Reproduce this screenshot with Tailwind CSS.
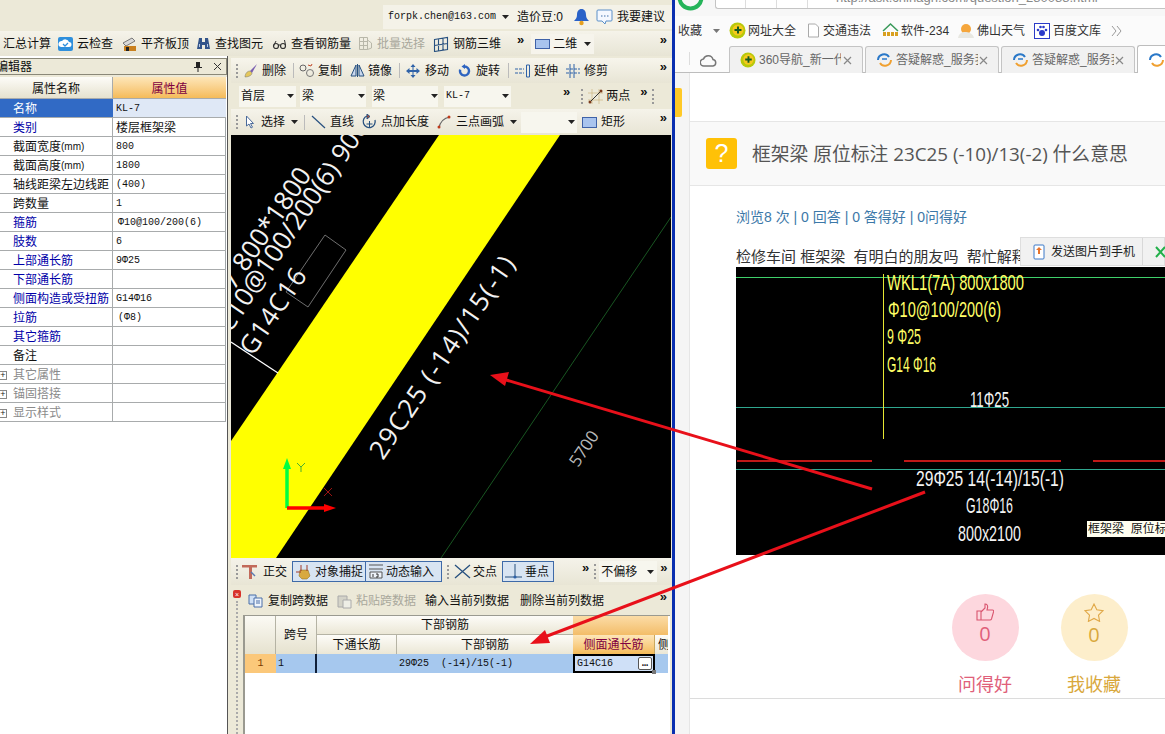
<!DOCTYPE html>
<html lang="zh-CN">
<head>
<meta charset="UTF-8">
<title>钢筋算量 - 框架梁</title>
<script src="https://cdn.jsdelivr.net/npm/@tailwindcss/browser@4"></script>
</head>
<body class="bg-white">
<div class="relative flex w-[1165px] h-[734px] overflow-hidden text-[12px] leading-[14px] text-[#111] font-['Liberation_Sans','Noto_Sans_CJK_SC',sans-serif]">

  <!-- software window -->
  <div class="flex flex-col w-[672px] shrink-0 bg-[#ece9d8]">
    <!-- account row -->
    <div class="flex justify-end h-[31px] shrink-0">
      <div class="flex items-center w-[289px] h-[24px] mt-[5px] bg-[#f4f2e8]">
        <span class="ml-[5px] font-['Liberation_Mono',monospace] text-[10px]">forpk.chen@163.com</span>
        <svg class="ml-[6px]" width="7" height="4"><path d="M0 0h7L3.500 4z" fill="#222"/></svg>
        <span class="ml-[8px]">造价豆:0</span>
        <svg class="ml-[10px]" width="17" height="18" viewBox="0 0 17 18"><path d="M8.500 1c3 0 4.500 2.500 4.500 6 0 3 1.500 4.500 3 6H1c1.500-1.500 3-3 3-6 0-3.500 1.500-6 4.500-6z" fill="#2a62c8"/><circle cx="8.500" cy="15" r="2.200" fill="#e5a021"/></svg>
        <svg class="ml-[6px]" width="17" height="18" viewBox="0 0 17 18"><path d="M2 2h13a1 1 0 0 1 1 1v9a1 1 0 0 1-1 1h-5l-1 3-3-3H2a1 1 0 0 1-1-1V3a1 1 0 0 1 1-1z" fill="#f4f8ff" stroke="#5a8fc8"/><path d="M5 8h1.500M8 8h1.500M11 8h1.500" stroke="#3f6fa8"/></svg>
        <span class="ml-[4px]">我要建议</span>
      </div>
    </div>

    <!-- main toolbar -->
    <div class="flex items-center h-[25px] shrink-0 bg-gradient-to-b from-[#f5f3ea] to-[#e8e5d5]">
      <span class="ml-[3px]">汇总计算</span>
      <span class="flex items-center gap-[4px] ml-[7px]"><svg width="15" height="16" viewBox="0 0 15 16"><rect y="1" width="15" height="14" rx="2" fill="#2f8fdc"/><path d="M3 11a3 3 0 0 1 1-6 4 4 0 0 1 7 1 2.500 2.500 0 0 1 0 5z" fill="#fff"/><path d="M5 8l2 2 3-3" stroke="#2f8fdc" stroke-width="1.300" fill="none"/></svg>云检查</span>
      <span class="flex items-center gap-[4px] ml-[9px]"><svg width="15" height="16" viewBox="0 0 15 16"><path d="M1 7l9-5 3 3-9 5z" fill="#d9d9d9" stroke="#777"/><rect x="2" y="10" width="12" height="5" fill="#c9801f"/><rect x="4" y="11" width="3" height="4" fill="#222"/></svg>平齐板顶</span>
      <span class="flex items-center gap-[4px] ml-[7px]"><svg width="15" height="14" viewBox="0 0 15 14"><path d="M3 1h3v4h3V1h3l2 11H9V8H6v4H1z" fill="#33548a"/><path d="M3 7h1v3H3zM11 7h1v3h-1z" fill="#b7c9e6"/></svg>查找图元</span>
      <span class="flex items-center gap-[4px] ml-[9px]"><svg width="15" height="12" viewBox="0 0 15 12"><circle cx="4" cy="8" r="2.500" fill="none" stroke="#333" stroke-width="1.200"/><circle cx="11" cy="8" r="2.500" fill="none" stroke="#333" stroke-width="1.200"/><path d="M6 7h2.500M1.500 8L4 3M13.500 7l-1-5" stroke="#333" fill="none"/></svg>查看钢筋量</span>
      <span class="flex items-center gap-[4px] ml-[7px] text-[#a9a89c]"><svg width="15" height="15" viewBox="0 0 15 15"><path d="M1.500 1.500h8v12h-8zM1.500 5.500h8M1.500 9.500h8M5.500 1.500v12M9.500 4l4 3v5l-4 1.500" fill="none" stroke="#b8b7a9"/></svg>批量选择</span>
      <span class="flex items-center gap-[4px] ml-[8px]"><svg width="16" height="16" viewBox="0 0 16 16"><path d="M1.500 3.500l13-2v12l-13 2zM5.500 3v12M10 2.500v12M1.500 9.500l13-2" fill="none" stroke="#27507f" stroke-width="1.100"/></svg>钢筋三维</span>
      <span class="ml-[16px] -mt-[8px] font-bold text-[13px]">»</span>
      <div class="flex items-center w-[63px] h-[20px] ml-[7px] bg-[#f6f4ec]">
        <svg class="ml-[4px]" width="15" height="10"><rect x="0.500" y="0.500" width="14" height="9" fill="#a9c4ee" stroke="#3f62a8"/></svg>
        <span class="ml-[3px]">二维</span>
        <svg class="ml-[7px]" width="7" height="4"><path d="M0 0h7L3.500 4z" fill="#222"/></svg>
      </div>
      <span class="ml-auto mr-[5px] -mt-[8px] font-bold text-[13px]">»</span>
    </div>

    <div class="flex flex-1 min-h-0">
      <!-- property editor -->
      <div class="flex flex-col w-[228px] shrink-0 bg-white border-r border-[#555]">
        <div class="flex items-center h-[17px] mt-[2px] bg-[#ece9d8] border border-l-0 border-[#8a8878] overflow-hidden">
          <span class="-ml-[4px]">编辑器</span>
          <svg class="ml-auto" width="8" height="10" viewBox="0 0 8 10"><path d="M2 0h4v5h2v1H4.500v4h-1V6H0V5h2z" fill="#222"/></svg>
          <svg class="ml-[11px] mr-[4px]" width="9" height="9"><path d="M1 1l7 7M8 1L1 8" stroke="#333"/></svg>
        </div>
        <div class="h-[2px] bg-[#ece9d8]"></div>
        <div class="grid grid-cols-[113px_113px] grid-rows-[22px_repeat(17,19px)] w-[226px] border-r border-[#a0a6a8] [&>div]:border-b [&>div]:border-[#a8abac] [&>div]:flex [&>div]:items-center [&>div]:pt-[2px]">
          <div class="justify-center bg-gradient-to-b from-[#fdfcf8] to-[#e6e2cf] border-r border-r-[#a8abac]">属性名称</div>
          <div class="justify-center bg-gradient-to-b from-[#fde6b8] to-[#f5bb58] text-[#800040]">属性值</div>

          <div class="pl-[13px] bg-[#316ac5] text-white">名称</div>
          <div class="pl-[3px] bg-[#dfe8f6] font-['Liberation_Mono',monospace] text-[10px]">KL-7</div>
          <div class="pl-[13px] text-[#0000a8] border-r border-r-[#a8abac]">类别</div>
          <div class="pl-[3px]">楼层框架梁</div>
          <div class="pl-[13px] border-r border-r-[#a8abac]">截面宽度<span class="text-[10px]">(mm)</span></div>
          <div class="pl-[3px] font-['Liberation_Mono',monospace] text-[10px]">800</div>
          <div class="pl-[13px] border-r border-r-[#a8abac]">截面高度<span class="text-[10px]">(mm)</span></div>
          <div class="pl-[3px] font-['Liberation_Mono',monospace] text-[10px]">1800</div>
          <div class="pl-[13px] border-r border-r-[#a8abac] whitespace-nowrap">轴线距梁左边线距</div>
          <div class="pl-[3px] font-['Liberation_Mono',monospace] text-[10px]">(400)</div>
          <div class="pl-[13px] border-r border-r-[#a8abac]">跨数量</div>
          <div class="pl-[3px] font-['Liberation_Mono',monospace] text-[10px]">1</div>
          <div class="pl-[13px] text-[#0000a8] border-r border-r-[#a8abac]">箍筋</div>
          <div class="pl-[5px] font-['Liberation_Mono',monospace] text-[10px]">Φ10@100/200(6)</div>
          <div class="pl-[13px] text-[#0000a8] border-r border-r-[#a8abac]">肢数</div>
          <div class="pl-[3px] font-['Liberation_Mono',monospace] text-[10px]">6</div>
          <div class="pl-[13px] text-[#0000a8] border-r border-r-[#a8abac]">上部通长筋</div>
          <div class="pl-[3px] font-['Liberation_Mono',monospace] text-[10px]">9Φ25</div>
          <div class="pl-[13px] text-[#0000a8] border-r border-r-[#a8abac]">下部通长筋</div>
          <div></div>
          <div class="pl-[13px] text-[#0000a8] border-r border-r-[#a8abac] whitespace-nowrap">侧面构造或受扭筋</div>
          <div class="pl-[3px] font-['Liberation_Mono',monospace] text-[10px]">G14Φ16</div>
          <div class="pl-[13px] text-[#0000a8] border-r border-r-[#a8abac]">拉筋</div>
          <div class="pl-[5px] font-['Liberation_Mono',monospace] text-[10px]">(Φ8)</div>
          <div class="pl-[13px] text-[#0000a8] border-r border-r-[#a8abac]">其它箍筋</div>
          <div></div>
          <div class="pl-[13px] border-r border-r-[#a8abac]">备注</div>
          <div></div>
          <div class="border-r border-r-[#a8abac] text-[#8a8a8a]"><span class="flex items-center justify-center w-[7px] h-[9px] border border-l-0 border-[#888] text-[#222] text-[9px] leading-none">+</span><span class="ml-[6px]">其它属性</span></div>
          <div></div>
          <div class="border-r border-r-[#a8abac] text-[#8a8a8a]"><span class="flex items-center justify-center w-[7px] h-[9px] border border-l-0 border-[#888] text-[#222] text-[9px] leading-none">+</span><span class="ml-[6px]">锚固搭接</span></div>
          <div></div>
          <div class="border-r border-r-[#a8abac] text-[#8a8a8a]"><span class="flex items-center justify-center w-[7px] h-[9px] border border-l-0 border-[#888] text-[#222] text-[9px] leading-none">+</span><span class="ml-[6px]">显示样式</span></div>
          <div></div>
        </div>
      </div>

      <!-- drawing column -->
      <div class="flex flex-col flex-1 min-w-0 pl-[3px]">
        <div class="h-[2px] shrink-0"></div>
        <!-- edit toolbar -->
        <div class="flex items-center h-[25px] shrink-0 bg-gradient-to-b from-[#f7f5ec] to-[#e8e5d5]">
          <span class="ml-[5px] h-[14px] border-l-2 border-dotted border-[#999]"></span>
          <span class="flex items-center gap-[4px] ml-[5px]"><svg width="15" height="15" viewBox="0 0 15 15"><path d="M14 1L7 8l2 2 5-9z" fill="#7a5fb0"/><path d="M2 14c0-3 2-6 5-6l2 2c0 2-3 4-7 4z" fill="#e4c75c" stroke="#777" stroke-width=".5"/></svg>删除</span>
          <span class="ml-[7px] h-[15px] border-l border-[#bbb]"></span>
          <span class="flex items-center gap-[3px] ml-[5px]"><svg width="16" height="15" viewBox="0 0 16 15"><circle cx="4" cy="5" r="3" fill="none" stroke="#666"/><circle cx="11" cy="10" r="3.500" fill="none" stroke="#777"/><path d="M9 2l3 1 1-2" stroke="#c04a2a" fill="none"/></svg>复制</span>
          <span class="flex items-center gap-[3px] ml-[8px]"><svg width="15" height="15" viewBox="0 0 15 15"><path d="M6 2v11H1zM9 2v11h5z" fill="#c9d8ef" stroke="#27507f"/><path d="M7.500 1v13" stroke="#27507f"/></svg>镜像</span>
          <span class="ml-[7px] h-[15px] border-l border-[#bbb]"></span>
          <span class="flex items-center gap-[5px] ml-[6px]"><svg width="14" height="14" viewBox="0 0 14 14"><path d="M7 0l2.500 3h-2v3h3V4L14 7l-3.500 3V8h-3v3h2L7 14l-2.500-3h2V8h-3v2L0 7l3.500-3v2h3V3h-2z" fill="#2f62a8"/></svg>移动</span>
          <span class="flex items-center gap-[5px] ml-[9px]"><svg width="13" height="13" viewBox="0 0 13 13"><path d="M6.500 2.500a4.500 4.500 0 1 1-4.300 3.200" fill="none" stroke="#2e64c0" stroke-width="2.400"/><path d="M7 0v5L3.500 2.500z" fill="#2e64c0"/></svg>旋转</span>
          <span class="ml-[8px] h-[15px] border-l border-[#bbb]"></span>
          <span class="flex items-center gap-[3px] ml-[6px]"><svg width="16" height="14" viewBox="0 0 16 14"><path d="M0 5h9M0 9h9" stroke="#2f62a8" stroke-dasharray="3 1"/><path d="M11.500 1h3v12h-3z" fill="none" stroke="#2f62a8"/></svg>延伸</span>
          <span class="flex items-center gap-[4px] ml-[8px]"><svg width="14" height="14" viewBox="0 0 14 14"><path d="M4 0v14M8 0v14" stroke="#2f62a8"/><path d="M0 5h14M0 9h14" stroke="#2f62a8" stroke-dasharray="3 1"/></svg>修剪</span>
          <span class="ml-auto mr-[5px] -mt-[8px] font-bold text-[13px]">»</span>
        </div>
        <!-- selector toolbar -->
        <div class="flex items-center h-[26px] shrink-0 bg-[#ece9d8]">
          <div class="flex items-center w-[57px] h-[21px] ml-[8px] bg-[#f7f6ee] pl-[2px]"><span>首层</span><svg class="ml-auto mr-[2px]" width="7" height="4"><path d="M0 0h7L3.500 4z" fill="#222"/></svg></div>
          <div class="flex items-center w-[66px] h-[21px] ml-[4px] bg-[#f7f6ee] pl-[2px]"><span>梁</span><svg class="ml-auto mr-[1px]" width="7" height="4"><path d="M0 0h7L3.500 4z" fill="#222"/></svg></div>
          <div class="flex items-center w-[66px] h-[21px] ml-[6px] bg-[#f7f6ee] pl-[1px]"><span>梁</span><svg class="ml-auto" width="7" height="4"><path d="M0 0h7L3.500 4z" fill="#222"/></svg></div>
          <div class="flex items-center w-[67px] h-[21px] ml-[6px] bg-[#f7f6ee] pl-[2px]"><span class="font-['Liberation_Mono',monospace] text-[10px]">KL-7</span><svg class="ml-auto mr-[2px]" width="7" height="4"><path d="M0 0h7L3.500 4z" fill="#222"/></svg></div>
          <span class="ml-[52px] -mt-[8px] font-bold text-[13px]">»</span>
          <span class="ml-[11px] h-[15px] border-l-2 border-dotted border-[#999]"></span>
          <span class="flex items-center gap-[3px] ml-[5px]"><svg width="15" height="15" viewBox="0 0 15 15"><path d="M0 4h15M0 11h15M4 0v15M11 0v15" stroke="#c0a060" stroke-width=".5"/><path d="M2 13L13 2" stroke="#333"/><circle cx="2" cy="13" r="1.500" fill="#7a3a1a"/><circle cx="13" cy="2" r="1.500" fill="#7a3a1a"/></svg>两点</span>
          <span class="ml-[10px] -mt-[8px] font-bold text-[13px]">»</span>
          <span class="ml-[5px] h-[15px] border-l-2 border-dotted border-[#999]"></span>
        </div>
        <!-- draw toolbar -->
        <div class="flex items-center h-[26px] shrink-0 bg-gradient-to-b from-[#f5f3ea] to-[#e8e5d5]">
          <span class="ml-[5px] h-[14px] border-l-2 border-dotted border-[#999]"></span>
          <svg class="ml-[7px]" width="10" height="14" viewBox="0 0 10 14"><path d="M1.500 1v10l2.500-2 2 4 1.500-.8-2-3.700h3z" fill="#fff" stroke="#4a6a9a"/></svg>
          <span class="ml-[6px]">选择</span>
          <svg class="ml-[6px]" width="7" height="4"><path d="M0 0h7L3.500 4z" fill="#222"/></svg>
          <span class="ml-[6px] h-[15px] border-l border-[#bbb]"></span>
          <span class="flex items-center gap-[4px] ml-[6px]"><svg width="15" height="14" viewBox="0 0 15 14"><path d="M1 1l13 12" stroke="#27507f" stroke-width="1.200"/></svg>直线</span>
          <span class="flex items-center gap-[4px] ml-[8px]"><svg width="15" height="16" viewBox="0 0 15 16"><path d="M5 2a6 6 0 1 0 8 4" fill="none" stroke="#27507f" stroke-width="1.300"/><path d="M5 0v5l3-2.500zM7.500 7v6M4.500 10h6" fill="#c04a2a" stroke="#27507f"/></svg>点加长度</span>
          <span class="flex items-center gap-[5px] ml-[8px]"><svg width="14" height="14" viewBox="0 0 14 14"><path d="M2 13C3 7 7 3 13 2" fill="none" stroke="#666" stroke-width="1.200"/><circle cx="2" cy="12" r="1.500" fill="#c03a1a"/><circle cx="12" cy="2" r="1.500" fill="#c03a1a"/></svg>三点画弧</span>
          <svg class="ml-[6px]" width="7" height="4"><path d="M0 0h7L3.500 4z" fill="#222"/></svg>
          <div class="flex items-center w-[56px] h-[21px] ml-[4px] bg-[#f7f6ee]"><svg class="ml-auto mr-[2px]" width="7" height="4"><path d="M0 0h7L3.500 4z" fill="#222"/></svg></div>
          <svg class="ml-[5px]" width="15" height="11"><rect x="0.500" y="0.500" width="14" height="10" fill="#a9c4ee" stroke="#3f62a8"/></svg>
          <span class="ml-[4px]">矩形</span>
          <span class="ml-auto mr-[5px] -mt-[8px] font-bold text-[13px]">»</span>
        </div>

        <!-- drawing canvas -->
        <svg class="block w-[440px] h-[423px] shrink-0 bg-black" viewBox="0 0 440 423" font-family="'Open Sans',sans-serif">
          <path d="M208 0H329L45 423H0V306z" fill="#ffff00"/>
          <path d="M440 82L210 423" stroke="#1e6b2a" stroke-width=".8"/>
          <path d="M94 100L115 115L77 172L55 157z" fill="none" stroke="#8a8a8a" stroke-width=".8"/>
          <path d="M0 207L47 238" stroke="#fff" stroke-width="1.200"/>
          <text transform="translate(3 156) rotate(-56)" font-size="26" fill="#f2f2f2">7 800*1800</text>
          <text transform="translate(-1 199) rotate(-56)" font-size="26" fill="#f2f2f2">C10@100/200(6) 900</text>
          <text transform="translate(22 222) rotate(-56)" font-size="26" fill="#f2f2f2" textLength="98">G14C16</text>
          <text transform="translate(152 326) rotate(-56)" font-size="26" fill="#f2f2f2" textLength="238">29C25 (-14)/15(-1)</text>
          <text transform="translate(347 333) rotate(-56)" font-size="17" fill="#b8b8b8">5700</text>
          <path d="M56 373V332" stroke="#00ff40" stroke-width="3.500"/><path d="M56 323l-4 11h8z" fill="#00ff40"/>
          <path d="M56 373H93" stroke="#ff0000" stroke-width="3.500"/><path d="M105 373l-12-4v8z" fill="#ff0000"/>
          <path d="M66 328l4 4 4-4M70 332v5" stroke="#1c9a3a" fill="none" stroke-width=".8"/>
          <path d="M93 353l8 8M101 353l-8 8" stroke="#c01818" stroke-width=".8"/>
        </svg>

        <!-- status toolbar -->
        <div class="flex items-center h-[27px] shrink-0 bg-gradient-to-b from-[#f5f3ea] to-[#e8e5d5]">
          <span class="ml-[5px] h-[14px] border-l-2 border-dotted border-[#999]"></span>
          <svg class="ml-[4px]" width="15" height="15" viewBox="0 0 15 15"><path d="M0 1h15v2.500h-5V15H7V3.500H0z" fill="#c26a5a"/><path d="M9 8l4 4" stroke="#5a7ab0" stroke-width="1.500"/></svg>
          <span class="ml-[6px]">正交</span>
          <div class="flex items-center h-[21px] ml-[5px] bg-[#d8e4f2] border border-[#3e6aa8]">
            <span class="flex items-center w-[73px] border-r border-[#3e6aa8] h-full"><svg class="ml-[3px]" width="16" height="16" viewBox="0 0 16 16"><path d="M4 6h8l2 6-3 3H6l-3-3z" fill="#d8a93f" stroke="#8a6a1a" stroke-width=".5"/><path d="M0 8h5M5 1v6M11 1v6" stroke="#a03a2a"/></svg><span class="ml-[3px]">对象捕捉</span></span>
            <span class="flex items-center w-[75px] h-full"><svg class="ml-[2px]" width="16" height="15" viewBox="0 0 16 15"><path d="M1 1h14M1 5h14M2 8h12v6H2z" fill="#eef3fa" stroke="#555"/><path d="M5 10v3M8 10h2v3H8" stroke="#333" fill="none"/></svg><span class="ml-[2px]">动态输入</span></span>
          </div>
          <span class="ml-[5px] h-[14px] border-l-2 border-dotted border-[#999]"></span>
          <svg class="ml-[5px]" width="17" height="15" viewBox="0 0 17 15"><path d="M1 1l15 13M16 1L1 14" stroke="#27507f" stroke-width="1.300"/></svg>
          <span class="ml-[2px]">交点</span>
          <div class="flex items-center w-[52px] h-[21px] ml-[5px] bg-[#d8e4f2] border border-[#3e6aa8]"><svg class="ml-[2px]" width="18" height="15" viewBox="0 0 18 15"><path d="M10 0v13M0 13h17" stroke="#27507f"/><circle cx="10" cy="13" r="1.600" fill="#2f62a8"/></svg><span class="ml-[2px]">垂点</span></div>
          <span class="ml-[28px] -mt-[8px] font-bold text-[13px]">»</span>
          <span class="ml-[5px] h-[15px] border-l-2 border-dotted border-[#999]"></span>
          <div class="flex items-center w-[58px] h-[21px] ml-[3px] bg-[#f7f6ee] pl-[2px]"><span>不偏移</span><svg class="ml-auto mr-[3px]" width="7" height="4"><path d="M0 0h7L3.500 4z" fill="#222"/></svg></div>
          <span class="ml-[3px] -mt-[8px] font-bold text-[13px]">»</span>
        </div>

        <!-- span data panel -->
        <div class="relative flex flex-col flex-1 min-h-0 bg-[#ece9d8] pl-[12px]">
          <span class="absolute left-[2px] top-[5px] flex items-center justify-center w-[8px] h-[8px] rounded-[2px] bg-[#d8322a] text-white text-[7px] leading-none">×</span>
          <span class="absolute left-[5px] top-[16px] bottom-0 border-l-2 border-dotted border-[#aaa]"></span>
          <div class="flex items-center h-[22px] mt-[5px] shrink-0">
            <span class="flex items-center gap-[5px] ml-[5px]"><svg width="15" height="14" viewBox="0 0 15 14"><path d="M1 1h7v9H1z" fill="#cfe0f5" stroke="#4a6fa8"/><path d="M6 4h8v9H6z" fill="#eef4fb" stroke="#4a6fa8"/><path d="M8 7h4M8 9h4" stroke="#4a6fa8"/></svg>复制跨数据</span>
            <span class="flex items-center gap-[4px] ml-[9px] text-[#a9a89c]"><svg width="15" height="15" viewBox="0 0 15 15"><path d="M1 2h9v11H1z" fill="#d4d3c8" stroke="#aaa"/><path d="M6 6h8v8H6z" fill="#eeeee6" stroke="#aaa"/></svg>粘贴跨数据</span>
            <span class="ml-[9px]">输入当前列数据</span>
            <span class="ml-[11px]">删除当前列数据</span>
            <span class="ml-auto mr-[5px] -mt-[8px] font-bold text-[13px]">»</span>
          </div>
          <div class="flex-1 mr-[2px] mt-[3px] bg-white border-l-2 border-t border-[#9a9a90]">
            <div class="grid grid-cols-[31px_41px_80px_176px_82px_13px] grid-rows-[19px_19px_19px]">
              <div class="row-span-2 bg-gradient-to-b from-[#fbfaf4] to-[#e6e2cf] border-r border-[#b5b3a4]"></div>
              <div class="row-span-2 flex items-center justify-center bg-gradient-to-b from-[#fbfaf4] to-[#e6e2cf] border-r border-[#b5b3a4]">跨号</div>
              <div class="col-span-2 flex items-center justify-center bg-gradient-to-b from-[#fdfcf8] to-[#ebe7d6] border-b border-[#b5b3a4]">下部钢筋</div>
              <div class="col-span-2 bg-gradient-to-b from-[#fbdca6] to-[#f3bd68]"></div>
              <div class="flex items-center justify-center bg-gradient-to-b from-[#fdfcf8] to-[#ebe7d6] border-r border-[#b5b3a4]">下通长筋</div>
              <div class="flex items-center justify-center bg-gradient-to-b from-[#fdfcf8] to-[#ebe7d6]">下部钢筋</div>
              <div class="flex items-center justify-center bg-gradient-to-b from-[#fde6b8] to-[#f5bb58] text-[#800040] border-r border-[#c9a860]">侧面通长筋</div>
              <div class="flex items-center pl-[3px] overflow-hidden bg-gradient-to-b from-[#fdfcf8] to-[#ebe7d6]">侧</div>
              <div class="flex items-center justify-center bg-[#fbc87a] text-[#7a3a00] font-['Liberation_Mono',monospace] text-[10px]">1</div>
              <div class="flex items-center pl-[2px] bg-[#a6c8ee] border-r-2 border-[#10203a] font-['Liberation_Mono',monospace] text-[10px]">1</div>
              <div class="bg-[#a6c8ee]"></div>
              <div class="flex items-center pl-[2px] bg-[#a6c8ee] font-['Liberation_Mono',monospace] text-[10px] whitespace-pre">29Φ25  (-14)/15(-1)</div>
              <div class="relative flex items-center pl-[2px] bg-[#cfe0f7] border-2 border-black font-['Liberation_Mono',monospace] text-[10px]">G14C16
                <span class="absolute right-[1px] top-[1px] flex items-center justify-center w-[14px] h-[13px] rounded-[2px] bg-white border border-[#555] font-bold leading-none">…</span>
                <span class="absolute -right-[3px] -bottom-[3px] w-[4px] h-[4px] bg-[#777]"></span>
              </div>
              <div class="bg-[#a6c8ee]"></div>
            </div>
          </div>
        </div>
      </div>
    </div>
  </div>

  <!-- window divider -->
  <div class="w-[3px] shrink-0 bg-[#0a2fb0]"></div>

  <!-- browser window -->
  <div class="flex flex-col flex-1 min-w-0 bg-white">
    <!-- address row -->
    <div class="relative flex h-[16px] shrink-0 bg-[#f7f7f7] overflow-hidden">
      <svg class="absolute left-[2px] -top-[16px]" width="27" height="27" viewBox="0 0 27 27"><circle cx="13.500" cy="13.500" r="11" fill="none" stroke="#25b45a" stroke-width="4"/></svg>
      <div class="flex ml-[40px] w-[450px] h-[9px] bg-white border-b border-l border-[#c4c4c4] rounded-bl-[3px]">
        <span class="w-[30px] border-r border-[#ddd]"></span>
        <span class="w-[31px] border-r border-[#ddd]"></span>
        <span class="w-[31px] border-r border-[#ddd]"></span>
        <span class="ml-[28px] -mt-[9px] text-[13px] text-[#888] whitespace-nowrap">http://ask.chinagh.com/question_280088.html</span>
      </div>
    </div>
    <!-- bookmarks -->
    <div class="flex items-center h-[29px] shrink-0 bg-[#fbfbfb] text-[#333]">
      <span class="ml-[3px]">收藏</span>
      <svg class="ml-[11px]" width="7" height="4"><path d="M0 0h7L3.500 4z" fill="#777"/></svg>
      <svg class="ml-[9px]" width="17" height="17" viewBox="0 0 17 17"><circle cx="8.500" cy="8.500" r="8" fill="#b8c90a"/><circle cx="9" cy="8" r="5.500" fill="#f6c81c"/><path d="M9 4.500v7M5.500 8h7" stroke="#155a20" stroke-width="2"/></svg>
      <span class="ml-[2px]">网址大全</span>
      <svg class="ml-[11px]" width="13" height="15" viewBox="0 0 13 15"><path d="M1.500 1h7l3 3v10h-10z" fill="#fff" stroke="#aaa"/></svg>
      <span class="ml-[3px]">交通违法</span>
      <svg class="ml-[11px]" width="17" height="17" viewBox="0 0 17 17"><path d="M1 9l7.500-7L16 9" fill="none" stroke="#3a9a5a" stroke-width="1.500"/><path d="M1 12h15" stroke="#d8a020" stroke-width="4" stroke-dasharray="3 1"/></svg>
      <span class="ml-[2px]">软件-234</span>
      <svg class="ml-[9px]" width="16" height="16" viewBox="0 0 16 16"><circle cx="8" cy="6" r="5" fill="#f5a63c"/><path d="M0 15c1-5 4-6 7-6s8 1 9 6z" fill="#e8e8e2"/></svg>
      <span class="ml-[3px]">佛山天气</span>
      <svg class="ml-[9px]" width="16" height="16" viewBox="0 0 16 16"><rect x=".5" y=".5" width="15" height="15" fill="#fff" stroke="#2a3ac8"/><circle cx="8" cy="10" r="3" fill="#2a3ac8"/><circle cx="4" cy="7" r="1.300" fill="#2a3ac8"/><circle cx="12" cy="7" r="1.300" fill="#2a3ac8"/><circle cx="6.500" cy="4" r="1.300" fill="#2a3ac8"/><circle cx="9.500" cy="4" r="1.300" fill="#2a3ac8"/></svg>
      <span class="ml-[3px]">百度文库</span>
      <svg class="ml-[10px]" width="11" height="10" viewBox="0 0 11 10"><path d="M1 0l4 5-4 5M6 0l4 5-4 5" fill="none" stroke="#999"/></svg>
    </div>
    <!-- tabs -->
    <div class="flex items-end h-[28px] shrink-0 bg-[#fbfbfb] border-b border-[#bdbdbd] text-[#666]">
      <span class="ml-[14px] mb-[7px] h-[13px] border-l border-[#ddd]"></span>
      <svg class="ml-[10px] mb-[5px]" width="17" height="13" viewBox="0 0 17 13"><path d="M4 12a3.500 3.500 0 0 1-.5-7 5 5 0 0 1 9.500.5A3.300 3.300 0 0 1 13 12z" fill="none" stroke="#777" stroke-width="1.500"/></svg>
      <div class="flex items-center w-[134px] h-[27px] ml-[12px] -mb-px bg-[#f1f1f1] border border-b-0 border-[#c4c4c4] rounded-t-[3px] overflow-hidden">
        <svg class="ml-[10px] shrink-0" width="16" height="16" viewBox="0 0 17 17"><circle cx="8.500" cy="8.500" r="8" fill="#b8c90a"/><circle cx="9" cy="8" r="5.500" fill="#f6c81c"/><path d="M9 4.500v7M5.500 8h7" stroke="#155a20" stroke-width="2"/></svg>
        <span class="ml-[3px] w-[82px] overflow-hidden whitespace-nowrap">360导航_新一代</span>
        <svg class="ml-[2px] shrink-0" width="9" height="9"><path d="M1 1l7 7M8 1L1 8" stroke="#888" stroke-width="1.200"/></svg>
      </div>
      <div class="flex items-center w-[134px] h-[27px] ml-[2px] -mb-px bg-[#f1f1f1] border border-b-0 border-[#c4c4c4] rounded-t-[3px] overflow-hidden">
        <svg class="ml-[10px] shrink-0" width="17" height="14" viewBox="0 0 17 14"><path d="M2 7a6 6 0 0 1 11-3" fill="none" stroke="#2a78c8" stroke-width="2"/><path d="M15 7a6 6 0 0 1-11 3" fill="none" stroke="#f0a030" stroke-width="2"/><path d="M6 6h5" stroke="#2a78c8" stroke-width="1.500"/></svg>
        <span class="ml-[3px] w-[82px] overflow-hidden whitespace-nowrap">答疑解惑_服务我</span>
        <svg class="ml-[1px] shrink-0" width="9" height="9"><path d="M1 1l7 7M8 1L1 8" stroke="#888" stroke-width="1.200"/></svg>
      </div>
      <div class="flex items-center w-[134px] h-[27px] ml-[2px] -mb-px bg-[#f1f1f1] border border-b-0 border-[#c4c4c4] rounded-t-[3px] overflow-hidden">
        <svg class="ml-[10px] shrink-0" width="17" height="14" viewBox="0 0 17 14"><path d="M2 7a6 6 0 0 1 11-3" fill="none" stroke="#2a78c8" stroke-width="2"/><path d="M15 7a6 6 0 0 1-11 3" fill="none" stroke="#f0a030" stroke-width="2"/><path d="M6 6h5" stroke="#2a78c8" stroke-width="1.500"/></svg>
        <span class="ml-[3px] w-[82px] overflow-hidden whitespace-nowrap">答疑解惑_服务我</span>
        <svg class="ml-[1px] shrink-0" width="9" height="9"><path d="M1 1l7 7M8 1L1 8" stroke="#888" stroke-width="1.200"/></svg>
      </div>
      <div class="flex items-center flex-1 h-[28px] ml-[2px] -mb-px bg-white border border-b-0 border-r-0 border-[#bdbdbd] rounded-tl-[3px] overflow-hidden">
        <svg class="ml-[10px] shrink-0" width="17" height="14" viewBox="0 0 17 14"><path d="M2 7a6 6 0 0 1 11-3" fill="none" stroke="#2a78c8" stroke-width="2"/><path d="M15 7a6 6 0 0 1-11 3" fill="none" stroke="#f0a030" stroke-width="2"/></svg>
      </div>
    </div>

    <!-- page -->
    <div class="relative flex flex-1 min-h-0">
      <div class="w-[15px] shrink-0 bg-[#f5f5f5] border-r border-[#e6e6e6]">
        <div class="w-[7px] h-[29px] mt-[15px] bg-[#ffc926] rounded-r-[2px]"></div>
      </div>
      <div class="flex flex-col flex-1 min-w-0 pt-[48px]">
        <div class="flex items-center h-[65px] shrink-0 pl-[16px] bg-[#f9f9f9] border-y border-[#e6e6e6]">
          <span class="flex items-center justify-center w-[31px] h-[31px] rounded-[3px] bg-[#ffc107] text-white text-[25px] leading-none">?</span>
          <span class="ml-[15px] text-[18.800px] leading-[24px] text-[#555] whitespace-nowrap font-['Open_Sans','Noto_Sans_CJK_SC',sans-serif]">框架梁 原位标注 23C25 (-10)/13(-2) 什么意思</span>
        </div>
        <div class="ml-[46px] mt-[21px] text-[14px] leading-[20px] text-[#3c78a8] whitespace-nowrap">浏览8 次 | 0 回答 | 0 答得好 | 0问得好</div>
        <div class="ml-[46px] mt-[19px] text-[15px] leading-[21px] text-[#333] whitespace-nowrap">检修车间 框架梁&nbsp; 有明白的朋友吗&nbsp; 帮忙解释一下</div>
        <svg class="block ml-[46px] w-[429px] h-[288px] shrink-0 bg-black" viewBox="0 0 429 288" font-family="'Liberation Sans','Noto Sans CJK SC',sans-serif">
          <rect x="0" y="10" width="429" height="1" fill="#3fd06a"/>
          <rect x="0" y="140" width="429" height="1" fill="#2fa78f"/>
          <rect x="0" y="202" width="429" height="1" fill="#2fa78f"/>
          <rect x="1" y="193" width="135" height="2" fill="#c01818"/>
          <rect x="168" y="193" width="157" height="2" fill="#c01818"/>
          <rect x="357" y="193" width="72" height="2" fill="#c01818"/>
          <rect x="147" y="7" width="1" height="165" fill="#e6e632"/>
          <g fill="#ffff66" font-size="22">
            <text x="151" y="23" textLength="137" lengthAdjust="spacingAndGlyphs">WKL1(7A) 800x1800</text>
            <text x="152" y="50" textLength="113" lengthAdjust="spacingAndGlyphs">Φ10@100/200(6)</text>
            <text x="151" y="77" textLength="34" lengthAdjust="spacingAndGlyphs">9 Φ25</text>
            <text x="151" y="105" textLength="49" lengthAdjust="spacingAndGlyphs">G14 Φ16</text>
          </g>
          <g fill="#f4f4f4" font-size="22">
            <text x="234" y="140" textLength="39" lengthAdjust="spacingAndGlyphs">11Φ25</text>
            <text x="180" y="219" textLength="148" lengthAdjust="spacingAndGlyphs">29Φ25 14(-14)/15(-1)</text>
            <text x="230" y="246" textLength="47" lengthAdjust="spacingAndGlyphs">G18Φ16</text>
            <text x="222" y="274" textLength="63" lengthAdjust="spacingAndGlyphs">800x2100</text>
          </g>
          <rect x="351" y="254" width="78" height="16" fill="#fffff0"/>
          <text x="352" y="266" font-size="12" fill="#111" xml:space="preserve">框架梁  原位标注</text>
        </svg>
        <div class="flex items-start h-[143px] shrink-0 pl-[261px] pt-[39px]">
          <div class="flex flex-col items-center w-[68px] text-[#e0607a]">
            <div class="flex flex-col items-center w-[67px] h-[67px] rounded-full bg-[#fdd7de] pt-[9px]">
              <svg width="18" height="18" viewBox="0 0 18 18"><path d="M1 8h4v9H1zM5 9l4-4V1c2 0 3 1.500 2.500 4l-.5 2h5.500c1 0 1.500 1 1 2l-2 7c-.3.700-1 1-1.500 1H5" fill="none" stroke="#d9546e" stroke-width="1.100"/></svg>
              <span class="text-[20px] leading-[26px] font-['Open_Sans',sans-serif]">0</span>
            </div>
            <span class="mt-[12px] text-[18px] leading-[24px] whitespace-nowrap">问得好</span>
          </div>
          <div class="flex flex-col items-center w-[68px] ml-[41px] text-[#d9a83c]">
            <div class="flex flex-col items-center w-[67px] h-[67px] rounded-full bg-[#fdeecb] pt-[9px]">
              <svg width="20" height="19" viewBox="0 0 20 19"><path d="M10 1l2.800 5.800 6.200.9-4.500 4.400 1.100 6.300L10 15.400l-5.600 3 1.100-6.300L1 7.700l6.200-.9z" fill="none" stroke="#e0a848" stroke-width="1.100"/></svg>
              <span class="text-[20px] leading-[26px] font-['Open_Sans',sans-serif]">0</span>
            </div>
            <span class="mt-[12px] text-[18px] leading-[24px] whitespace-nowrap">我收藏</span>
          </div>
        </div>
      </div>
      <div class="absolute left-[15px] right-0 bottom-[35px] border-t border-[#dcdcdc]"></div>
    </div>
  </div>

  <!-- send-to-phone popup over the page -->
  <div class="absolute left-[1020px] top-[237px] flex items-center w-[145px] h-[29px] bg-[#f1f1f1] border border-[#dedede] text-[#222]">
    <svg class="ml-[11px] shrink-0" width="14" height="16" viewBox="0 0 14 16"><rect x="2" y="1" width="10" height="14" rx="1" fill="#fff" stroke="#3a78c8"/><path d="M4 6h6l-3-3zM6 6h2v4H6z" fill="#e8732a"/></svg>
    <span class="ml-[5px] shrink-0 whitespace-nowrap">发送图片到手机</span>
    <span class="ml-[7px] h-[27px] border-l border-[#d8d8d8]"></span>
    <svg class="ml-[12px] shrink-0" width="11" height="14" viewBox="0 0 11 14"><path d="M1 2l9 10M10 2L1 12" stroke="#22b04a" stroke-width="2"/></svg>
  </div>

  <!-- red annotation arrows over both windows -->
  <svg class="absolute inset-0 pointer-events-none" width="1165" height="734" viewBox="0 0 1165 734">
    <path d="M872 489L503 379" stroke="#e8101a" stroke-width="3"/>
    <path d="M490 375L509 372L505 386z" fill="#e8101a"/>
    <path d="M925 492L542 638" stroke="#e8101a" stroke-width="3"/>
    <path d="M530 644L545 630L550 643z" fill="#e8101a"/>
  </svg>
</div>
</body>
</html>
